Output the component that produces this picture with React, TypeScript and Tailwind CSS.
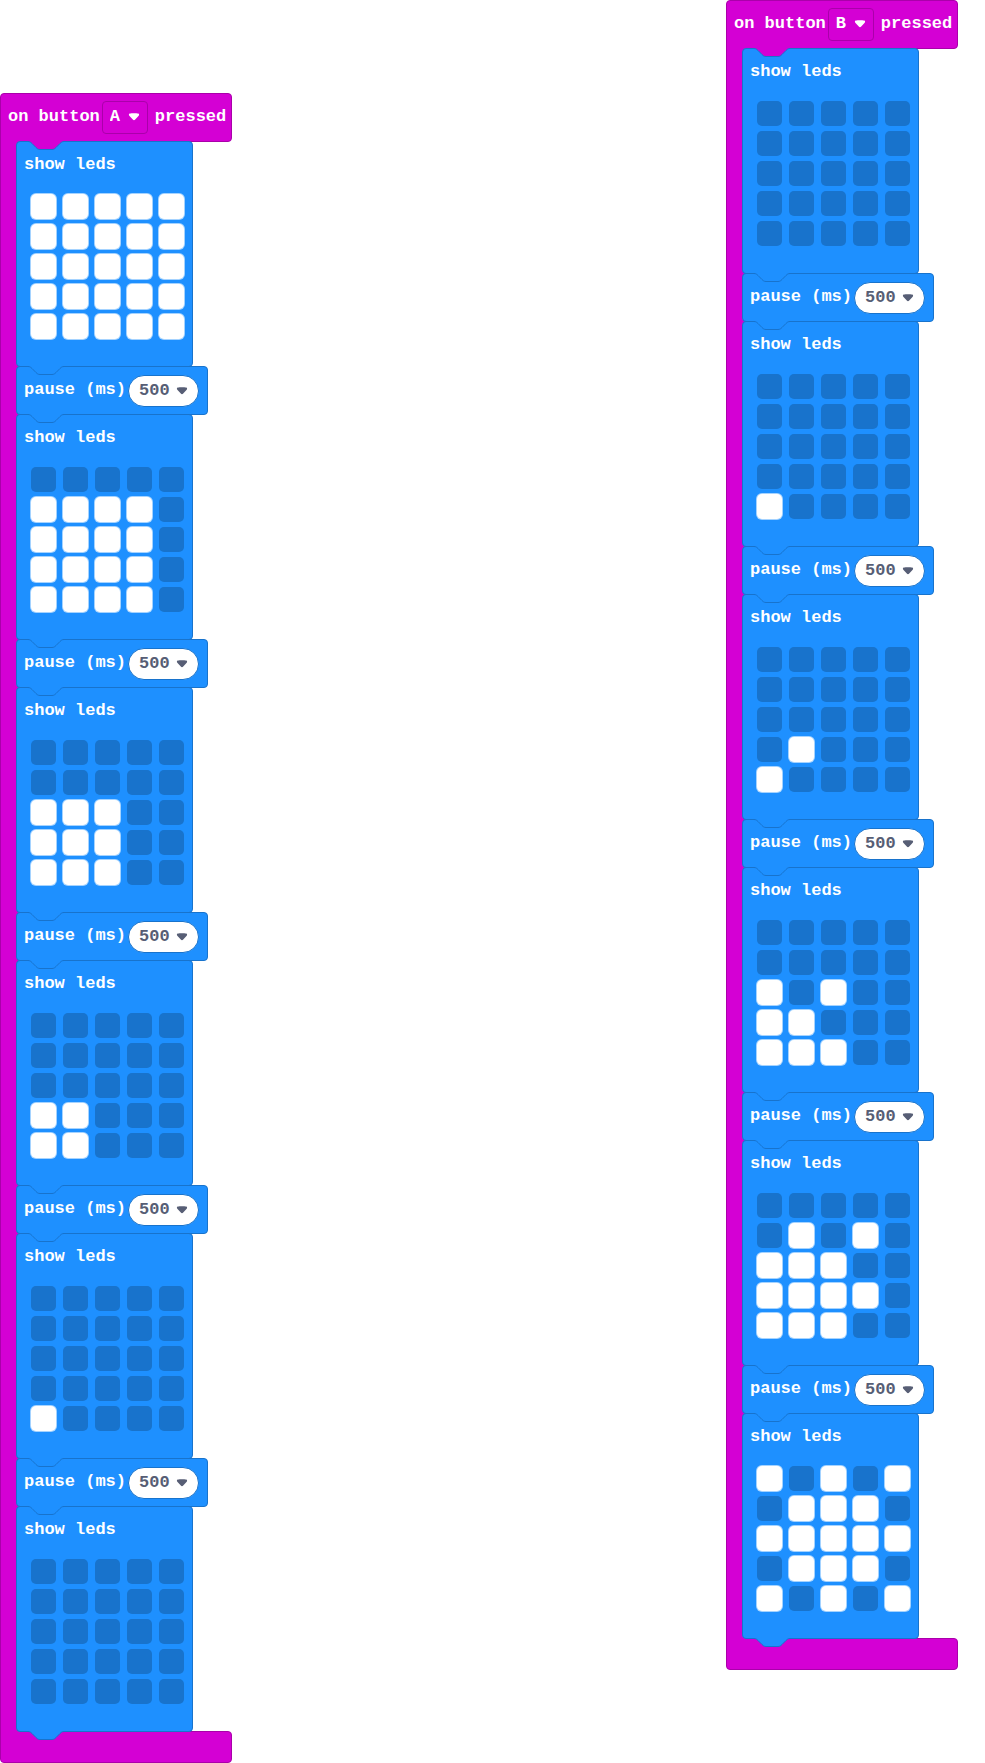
import { useState } from "react";

const NOTCH = "c2 0 3 1 4 2l4 4c1 1 2 2 4 2h12c2 0 3-1 4-2l4-4c1-1 2-2 4-2";

type Frame = string[];

const FRAMES_A: Frame[] = [
  ["#####", "#####", "#####", "#####", "#####"],
  [".....", "####.", "####.", "####.", "####."],
  [".....", ".....", "###..", "###..", "###.."],
  [".....", ".....", ".....", "##...", "##..."],
  [".....", ".....", ".....", ".....", "#...."],
  [".....", ".....", ".....", ".....", "....."],
];

const FRAMES_B: Frame[] = [
  [".....", ".....", ".....", ".....", "....."],
  [".....", ".....", ".....", ".....", "#...."],
  [".....", ".....", ".....", ".#...", "#...."],
  [".....", ".....", "#.#..", "##...", "###.."],
  [".....", ".#.#.", "###..", "####.", "###.."],
  ["#.#.#", ".###.", "#####", ".###.", "#.#.#"],
];

function Connector({ fill, place }: { fill: string; place: string }) {
  return (
    <svg
      className={`pointer-events-none absolute left-[11px] z-10 ${place}`}
      width="36"
      height="10"
      viewBox="0 0 36 10"
      fill="none"
      aria-hidden="true"
    >
      <path d={`M0 0V.5${NOTCH}V0z`} className={fill} />
      <path d={`M0 .5${NOTCH}`} className="stroke-[#1873cc]" />
    </svg>
  );
}

function Caret({ className }: { className: string }) {
  return (
    <svg
      className={`pointer-events-none absolute ${className}`}
      width="12"
      height="8"
      viewBox="0 0 12 8"
      fill="currentColor"
      aria-hidden="true"
    >
      <path d="M1.8.6C3.6 0 8.400 0 10.200.6 11.200.9 11.400 2 10.700 2.800L7.200 6.600C6.500 7.300 5.500 7.300 4.800 6.600L1.300 2.800C.6 2 .8.9 1.800.6z" />
    </svg>
  );
}

function ShowLeds({ frame, first, last }: { frame: Frame; first: boolean; last: boolean }) {
  const [lit, setLit] = useState(() => frame.join("").split("").map((c) => c === "#"));
  return (
    <section className="relative -mb-px w-[177px] rounded border border-[#1873cc] bg-[#1e90ff] pb-[27px]">
      <Connector fill={first ? "fill-[#d400d4]" : "fill-[#1e90ff]"} place="-top-px" />
      <h2 className="px-[7px] pt-[11px] leading-6">show leds</h2>
      <div className="mt-[17px] grid w-fit grid-cols-5 gap-x-[7px] gap-y-[5px] pl-[14px]">
        {lit.map((on, i) => (
          <input
            key={i}
            type="checkbox"
            aria-label={`LED row ${Math.floor(i / 5) + 1}, column ${(i % 5) + 1}`}
            checked={on}
            onChange={() => setLit(lit.map((v, j) => (j === i ? !v : v)))}
            className="m-0 size-[25px] cursor-pointer appearance-none rounded-[5px] bg-[#1873cc] checked:bg-white checked:shadow-[0_0_0_1px_#a5d3ff]"
          />
        ))}
      </div>
      {last && <Connector fill="fill-[#1e90ff]" place="-bottom-[10px]" />}
    </section>
  );
}

function Pause() {
  return (
    <label className="relative -mb-px flex h-[49px] w-fit items-center gap-[2px] rounded border border-[#1873cc] bg-[#1e90ff] pr-2 pl-[7px]">
      <Connector fill="fill-[#1e90ff]" place="-top-px" />
      <span className="pb-px whitespace-nowrap">pause (ms)</span>
      <span className="relative flex text-[#575e75]">
        <select
          defaultValue="500"
          className="h-8 w-[71px] cursor-pointer appearance-none rounded-full border border-[#1873cc] bg-white pr-6 pl-[10px]"
        >
          <option>100</option>
          <option>200</option>
          <option>500</option>
          <option>1000</option>
        </select>
        <Caret className="top-3 right-[11px]" />
      </span>
    </label>
  );
}

function ButtonEvent({ button, frames, className }: { button: string; frames: Frame[]; className: string }) {
  return (
    <article className={`w-[232px] ${className}`}>
      <label className="flex h-[49px] items-center rounded rounded-bl-none border border-[#aa00aa] bg-[#d400d4] pl-[7px]">
        <span className="pb-px whitespace-nowrap">on button</span>
        <span className="relative ml-[2px] flex">
          <select
            defaultValue={button}
            className="h-[33px] w-[46px] cursor-pointer appearance-none rounded border border-[#aa00aa] bg-[#d400d4] pb-px pl-[7px]"
          >
            <option>A</option>
            <option>B</option>
          </select>
          <Caret className="top-3 right-2" />
        </span>
        <span className="ml-[7px] pb-px">pressed</span>
      </label>
      <div className="flex">
        <div className="-my-px w-5 shrink-0 border-l border-[#aa00aa] bg-[#d400d4]" />
        <div className="relative -mt-px -ml-1">
          {frames.map((frame, i) => (
            <div key={i}>
              {i > 0 && <Pause />}
              <ShowLeds frame={frame} first={i === 0} last={i === frames.length - 1} />
            </div>
          ))}
        </div>
      </div>
      <div className="h-8 rounded rounded-tl-none border border-[#aa00aa] bg-[#d400d4]" />
    </article>
  );
}

export default function App() {
  return (
    <main className="flex items-start justify-between bg-white pr-[27px] font-['Liberation_Mono',monospace] text-[17px] leading-6 font-bold text-white">
      <ButtonEvent button="A" frames={FRAMES_A} className="mt-[93px]" />
      <ButtonEvent button="B" frames={FRAMES_B} className="" />
    </main>
  );
}
